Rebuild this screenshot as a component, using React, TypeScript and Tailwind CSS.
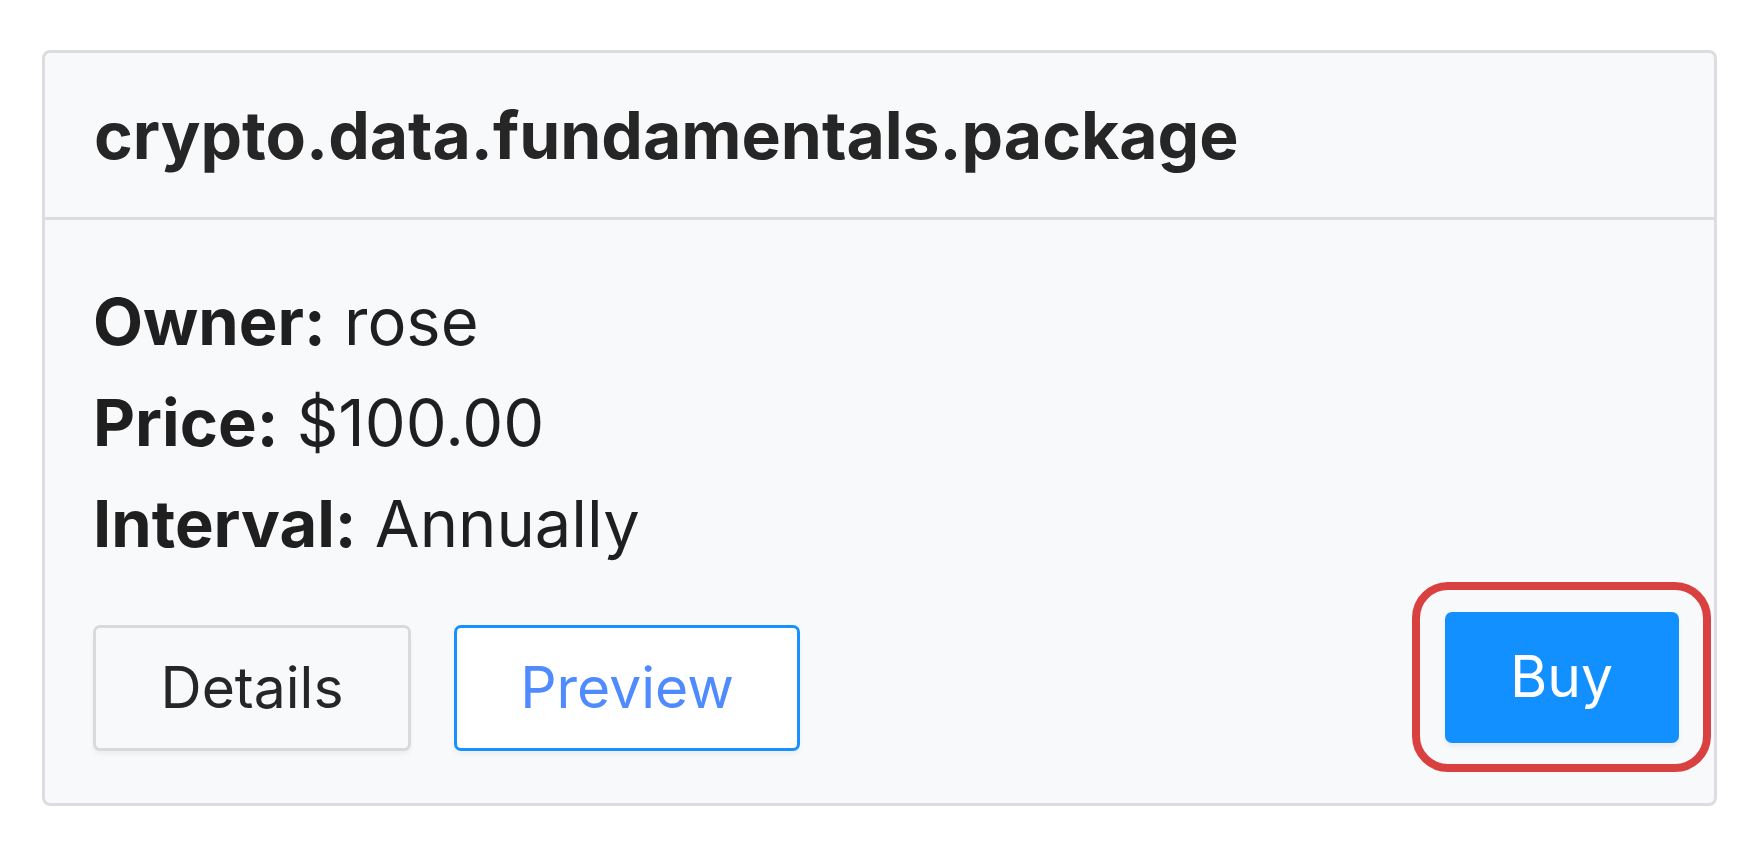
export default function App() {
  return (
    <div className="min-h-[845px] w-[1746px] bg-white pt-[50px] pl-[42px] font-['Inter','Noto_Sans',sans-serif]">
      <div className="w-[1675px] rounded-[8px] border-[3px] border-[#dcdde0] bg-[#f8f9fb]">
        <div className="flex h-[167px] items-center border-b-[3px] border-[#dcdde0] pl-[49px]">
          <h1 className="text-[66px] leading-none font-bold text-[#262626]">crypto.data.fundamentals.package</h1>
        </div>
        <div className="pl-[48px] pr-[3px] pt-[51px] pb-[31px] text-[65px] text-[#1f1f1f]">
          <div className="flex flex-col leading-[101px]">
            <p><span className="font-bold">Owner:</span> rose</p>
            <p><span className="font-bold">Price:</span> $100.00</p>
            <p><span className="font-bold">Interval:</span> Annually</p>
          </div>
          <div className="mt-[8px] flex items-start">
            <button className="mt-[43px] h-[126px] w-[318px] rounded-[7px] border-[3px] border-[#d9d9d9] bg-[#f8f9fb] text-[57px] text-[#262626] shadow-[0_4px_4px_rgba(0,0,0,0.04)]">
              Details
            </button>
            <button className="ml-[43px] mt-[43px] h-[126px] w-[346px] rounded-[7px] border-[3px] border-[#1890ff] bg-white text-[57px] text-[#4f8bff] shadow-[0_4px_4px_rgba(0,0,0,0.04)]">
              Preview
            </button>
            <div className="ml-auto flex h-[190px] w-[299px] items-center justify-center rounded-[36px] border-[8px] border-[#d94141]">
              <button className="h-[131px] w-[234px] rounded-[7px] bg-[#1390ff] text-[57px] text-white shadow-[0_4px_4px_rgba(0,0,0,0.05)]">
                Buy
              </button>
            </div>
          </div>
        </div>
      </div>
    </div>
  );
}
